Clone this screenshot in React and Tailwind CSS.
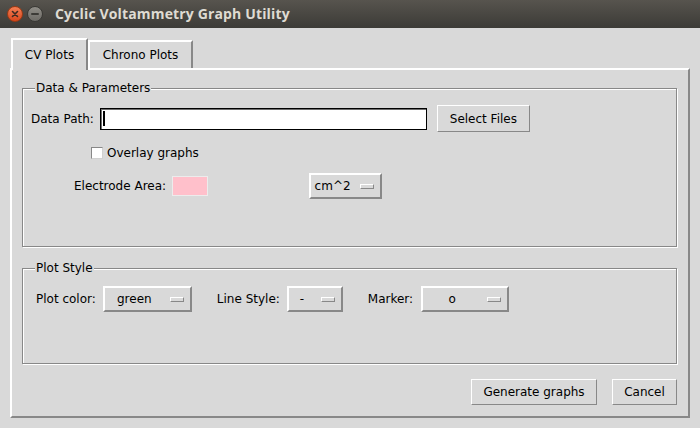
import React from 'react';

const raisedThin = 'border border-t-white border-l-white border-b-[#888888] border-r-[#888888]';
const raisedThick = 'border-2 border-t-white border-l-white border-b-[#888888] border-r-[#888888]';

function Button({ children, className = '' }) {
  return (
    <div className={`flex items-center justify-center bg-[#d9d9d9] ${raisedThin} ${className}`}>
      {children}
    </div>
  );
}

function MenuButton({ value, className = '' }) {
  return (
    <div className={`flex items-center bg-[#d9d9d9] ${raisedThick} ${className}`}>
      <span className="flex-1 text-center">{value}</span>
      <span className={`ml-[6px] mr-[6px] h-[5px] w-[14px] shrink-0 bg-[#d9d9d9] ${raisedThin}`} />
    </div>
  );
}

function GroupBox({ title, className = '', children }) {
  return (
    <div className={`relative border border-[#888888] shadow-[inset_1px_1px_0_#ffffff,1px_1px_0_#ffffff] ${className}`}>
      <span className="absolute left-[12px] top-[-8px] bg-[#d9d9d9] px-[1px] leading-[14px]">{title}</span>
      {children}
    </div>
  );
}

export default function App() {
  return (
    <div className="w-[700px] h-[428px] overflow-hidden bg-[#d9d9d9] font-['DejaVu_Sans',sans-serif] text-[12px] leading-[14px] text-black">
      {/* title bar */}
      <div className="flex h-[28px] items-center bg-linear-to-b from-[#57544e] to-[#3c3b37] pl-[7px]">
        <div className="flex h-[16px] w-[16px] items-center justify-center rounded-full border border-[#9c3a14] bg-linear-to-b from-[#f37d52] to-[#d8461a]">
          <svg width="8" height="8" viewBox="0 0 8 8">
            <path d="M1.5 1.5 L6.5 6.5 M6.5 1.5 L1.5 6.5" stroke="#3c2a22" strokeWidth="1.6" strokeLinecap="round" />
          </svg>
        </div>
        <div className="ml-[4px] flex h-[16px] w-[16px] items-center justify-center rounded-full border border-[#3a3935] bg-linear-to-b from-[#8f8d87] to-[#6d6b66]">
          <span className="h-[2px] w-[8px] rounded-[1px] bg-[#3c3b37]" />
        </div>
        <span className="ml-[12px] font-['Open_Sans',sans-serif] text-[14px] font-bold leading-[18px] tracking-[0.15px] text-[#dfdbd2]">
          Cyclic Voltammetry Graph Utility
        </span>
      </div>

      <div className="pl-[10px] pt-[10px]">
        {/* tabs */}
        <div className="flex h-[30px] items-end pl-[1px]">
          <div className="relative z-10 -mb-[2px] flex h-[32px] w-[77px] items-center justify-center border-l-2 border-r-2 border-t-2 border-l-white border-t-white border-r-[#888888] bg-[#d9d9d9]">
            CV Plots
          </div>
          <div className="flex h-[28px] w-[105px] items-center justify-center border-l-2 border-r-2 border-t-2 border-l-white border-t-white border-r-[#888888] bg-[#d9d9d9]">
            Chrono Plots
          </div>
        </div>

        {/* notebook panel */}
        <div className="h-[350px] w-[680px] border-2 border-t-white border-l-white border-b-[#888888] border-r-[#888888] pl-[10px] pt-[18px]">
          <GroupBox title="Data & Parameters" className="h-[159px] w-[655px]">
            <div className="mt-[16px] flex h-[27px] items-center pl-[8px]">
              <span>Data Path:</span>
              <div className="ml-[6px] flex h-[22px] w-[327px] items-center border border-black bg-white shadow-[inset_1px_1px_0_#6e6e6e] pl-[2px]">
                <span className="h-[15px] w-[2px] bg-black" />
              </div>
              <Button className="ml-[10px] h-[27px] w-[93px]">Select Files</Button>
            </div>
            <div className="mt-[12px] flex h-[18px] items-center pl-[68px]">
              <span className="h-[12px] w-[12px] border border-t-[#888888] border-l-[#888888] border-b-[#d0d0d0] border-r-[#d0d0d0] bg-white" />
              <span className="ml-[4px]">Overlay graphs</span>
            </div>
            <div className="mt-[11px] flex h-[26px] items-center pl-[51px]">
              <span>Electrode Area:</span>
              <span className="ml-[6px] h-[20px] w-[36px] border border-[#ececec] bg-[#ffc0cb]" />
              <MenuButton value="cm^2" className="ml-[101px] h-[26px] w-[73px]" />
            </div>
          </GroupBox>

          <GroupBox title="Plot Style" className="mt-[21px] h-[96px] w-[655px]">
            <div className="mt-[17px] flex h-[26px] items-center pl-[13px]">
              <span>Plot color:</span>
              <MenuButton value="green" className="ml-[7px] h-[26px] w-[89px]" />
              <span className="ml-[25px]">Line Style:</span>
              <MenuButton value="-" className="ml-[7px] h-[26px] w-[56px]" />
              <span className="ml-[25px]">Marker:</span>
              <MenuButton value="o" className="ml-[8px] h-[26px] w-[88px]" />
            </div>
          </GroupBox>

          <div className="mt-[15px] flex w-[655px] justify-end">
            <Button className="h-[26px] w-[126px]">Generate graphs</Button>
            <Button className="ml-[15px] h-[26px] w-[65px]">Cancel</Button>
          </div>
        </div>
      </div>
    </div>
  );
}
